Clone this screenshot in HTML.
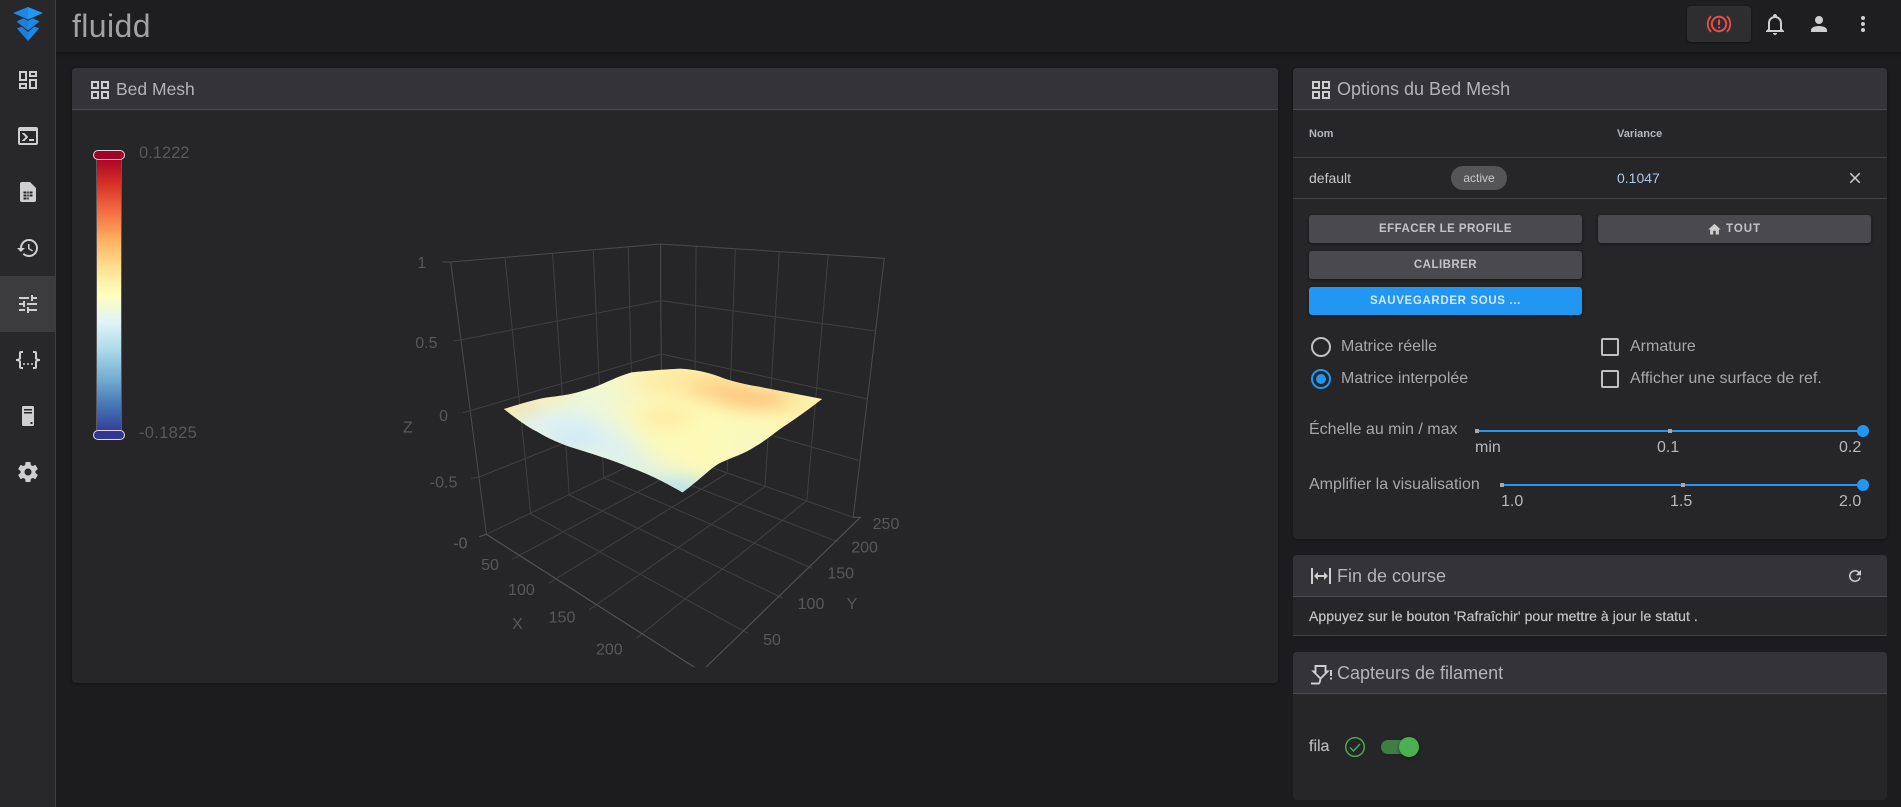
<!DOCTYPE html>
<html lang="fr"><head><meta charset="utf-8"><title>fluidd</title>
<style>
html,body{margin:0;padding:0;width:1901px;height:807px;overflow:hidden;background:#1c1c1e;font-family:"Liberation Sans",sans-serif;color:#b9b9ba}
div,span.t{position:absolute;box-sizing:border-box}
.t{white-space:nowrap;line-height:20px;height:20px}
svg{position:absolute;overflow:visible}
.card{background:#262628;border-radius:4px}
.hd{background:#343438;border-bottom:1px solid #4c4c4f;border-radius:4px 4px 0 0;left:0;top:0;height:42px;width:100%}
.ttl{font-size:18px;color:#b4b4b6}
.btn{background:#4a4a4e;border-radius:3px;box-shadow:0 1px 3px rgba(0,0,0,.45);height:28px;width:273px;text-align:center;font-weight:bold;font-size:11.5px;letter-spacing:.47px;line-height:28px;color:#c4c4c6}
.lb{font-size:16px;color:#a8a8aa}
.ic path{fill:#cfcfcf}
</style></head><body>

<!-- top bar -->
<div style="left:0;top:0;width:1901px;height:52px;background:#1e1e20;box-shadow:0 2px 4px rgba(0,0,0,.25)"></div>
<!-- sidebar -->
<div style="left:0;top:0;width:56px;height:807px;background:#28282a;border-right:1px solid #3e3e40"></div>
<div style="left:0;top:276px;width:55px;height:56px;background:#3c3c3e"></div>

<svg style="left:0;top:0" width="56" height="52" viewBox="0 0 56 52">
 <polygon points="17,28.5 28,24 39,28.5 28,41" fill="#1c80da"/>
 <polygon points="28,24 39,28.5 28,41" fill="#1e88e5"/>
 <polygon points="15.5,21.5 28,16 40.5,21.5 28,32" fill="#28282a"/>
 <polygon points="16.5,21.5 28,16 28,30.6" fill="#1c80da"/>
 <polygon points="28,16 39.5,21.5 28,30.6" fill="#1e88e5"/>
 <polygon points="12,13 28,6 44,13 28,20.6" fill="#28282a"/>
 <polygon points="13,13 28,7 28,19.5" fill="#1e88e5"/>
 <polygon points="28,7 43,13 28,19.5" fill="#2196f3"/>
</svg>
<span class="t" style="left:72px;top:7px;font-size:32px;height:38px;line-height:38px;color:#a2a2a2;letter-spacing:.4px">fluidd</span>

<!-- sidebar icons -->
<svg class="ic" style="left:16px;top:68px" width="24" height="24" viewBox="0 0 24 24"><path d="M19,5V7H15V5H19M9,5V11H5V5H9M19,13V19H15V13H19M9,17V19H5V17H9M21,3H13V9H21V3M11,3H3V13H11V3M21,11H13V21H21V11M11,15H3V21H11V15Z"/></svg>
<svg class="ic" style="left:16px;top:124px" width="24" height="24" viewBox="0 0 24 24"><path d="M20,19V7H4V19H20M20,3A2,2 0 0,1 22,5V19A2,2 0 0,1 20,21H4A2,2 0 0,1 2,19V5C2,3.89 2.9,3 4,3H20M13,17V15H18V17H13M9.58,13L5.57,9H8.4L11.7,12.3C12.09,12.69 12.09,13.33 11.7,13.72L8.42,17H5.59L9.58,13Z"/></svg>
<svg class="ic" style="left:16px;top:180px" width="24" height="24" viewBox="0 0 24 24"><path fill-rule="evenodd" d="M14,2H6A2,2 0 0,0 4,4V20A2,2 0 0,0 6,22H18A2,2 0 0,0 20,20V8L14,2M7.5,11.5H10.5V13.5H7.5V11.5M11.25,11.5H12.75V13.5H11.25V11.5M13.5,11.5H16.5V13.5H13.5V11.5M7.5,14.5H10.5V16.5H7.5V14.5M11.25,14.5H12.75V16.5H11.25V14.5M13.5,14.5H16.5V16.5H13.5V14.5M7.5,17.5H10.5V19.5H7.5V17.5M11.25,17.5H12.75V19.5H11.25V17.5Z"/></svg>
<svg class="ic" style="left:16px;top:236px" width="24" height="24" viewBox="0 0 24 24"><path d="M13.5,8H12V13L16.28,15.54L17,14.33L13.5,12.25V8M13,3A9,9 0 0,0 4,12H1L4.96,16.03L9,12H6A7,7 0 0,1 13,5A7,7 0 0,1 20,12A7,7 0 0,1 13,19C11.07,19 9.32,18.21 8.06,16.94L6.64,18.36C8.27,20 10.5,21 13,21A9,9 0 0,0 22,12A9,9 0 0,0 13,3"/></svg>
<svg class="ic" style="left:16px;top:292px" width="24" height="24" viewBox="0 0 24 24"><path d="M3,17V19H9V17H3M3,5V7H13V5H3M13,21V19H21V17H13V15H11V21H13M7,9V11H3V13H7V15H9V9H7M21,13V11H11V13H21M15,9H17V7H21V5H17V3H15V9Z"/></svg>
<svg class="ic" style="left:16px;top:348px" width="24" height="24" viewBox="0 0 24 24"><path d="M5,3H7V5H5V10A2,2 0 0,1 3,12A2,2 0 0,1 5,14V19H7V21H5C3.93,20.73 3,20.1 3,19V15A2,2 0 0,0 1,13H0V11H1A2,2 0 0,0 3,9V5A2,2 0 0,1 5,3M19,3A2,2 0 0,1 21,5V9A2,2 0 0,0 23,11H24V13H23A2,2 0 0,0 21,15V19A2,2 0 0,1 19,21H17V19H19V14A2,2 0 0,1 21,12A2,2 0 0,1 19,10V5H17V3H19M12,15A1,1 0 0,1 13,16A1,1 0 0,1 12,17A1,1 0 0,1 11,16A1,1 0 0,1 12,15M8,15A1,1 0 0,1 9,16A1,1 0 0,1 8,17A1,1 0 0,1 7,16A1,1 0 0,1 8,15M16,15A1,1 0 0,1 17,16A1,1 0 0,1 16,17A1,1 0 0,1 15,16A1,1 0 0,1 16,15Z"/></svg>
<svg class="ic" style="left:16px;top:404px" width="24" height="24" viewBox="0 0 24 24"><path fill-rule="evenodd" d="M7,2H17A1.5,1.5 0 0,1 18,3.5V20.5A1.5,1.5 0 0,1 17,22H7A1.5,1.5 0 0,1 6,20.5V3.5A1.5,1.5 0 0,1 7,2M8,5V6.5H16V5H8M8,8V9.5H16V8H8M14.5,18V20H16.5V18H14.5Z"/></svg>
<svg class="ic" style="left:16px;top:460px" width="24" height="24" viewBox="0 0 24 24"><path d="M12,15.5A3.5,3.5 0 0,1 8.5,12A3.5,3.5 0 0,1 12,8.5A3.5,3.5 0 0,1 15.5,12A3.5,3.5 0 0,1 12,15.5M19.43,12.97C19.47,12.65 19.5,12.33 19.5,12C19.5,11.67 19.47,11.34 19.43,11L21.54,9.37C21.73,9.22 21.78,8.95 21.66,8.73L19.66,5.27C19.54,5.05 19.27,4.96 19.05,5.05L16.56,6.05C16.04,5.66 15.5,5.32 14.87,5.07L14.5,2.42C14.46,2.18 14.25,2 14,2H10C9.75,2 9.54,2.18 9.5,2.42L9.13,5.07C8.5,5.32 7.96,5.66 7.44,6.05L4.95,5.05C4.73,4.96 4.46,5.05 4.34,5.27L2.34,8.73C2.21,8.95 2.27,9.22 2.46,9.37L4.57,11C4.53,11.34 4.5,11.67 4.5,12C4.5,12.33 4.53,12.65 4.57,12.97L2.46,14.63C2.27,14.78 2.21,15.05 2.34,15.27L4.34,18.73C4.46,18.95 4.73,19.03 4.95,18.95L7.44,17.94C7.96,18.34 8.5,18.68 9.13,18.93L9.5,21.58C9.54,21.82 9.75,22 10,22H14C14.25,22 14.46,21.82 14.5,21.58L14.87,18.93C15.5,18.67 16.04,18.34 16.56,17.94L19.05,18.95C19.27,19.03 19.54,18.95 19.66,18.73L21.66,15.27C21.78,15.05 21.73,14.78 21.54,14.63L19.43,12.97Z"/></svg>

<!-- top bar right -->
<div style="left:1687px;top:6px;width:64px;height:36px;background:#2e2e30;border-radius:4px;box-shadow:0 1px 3px rgba(0,0,0,.4)"></div>
<svg style="left:1707px;top:12px" width="24" height="24" viewBox="0 0 24 24" fill="none" stroke="#ef4b4b" stroke-width="2">
 <circle cx="12" cy="12" r="7.2"/>
 <path d="M4,4.2A11,11 0 0,0 4,19.8M20,4.2A11,11 0 0,1 20,19.8" stroke-width="1.8"/>
 <path d="M12,7.5V13M12,14.6V16.4" stroke-width="2.1"/>
</svg>
<svg class="ic" style="left:1763px;top:12px" width="24" height="24" viewBox="0 0 24 24"><path d="M10 21H14C14 22.1 13.1 23 12 23S10 22.1 10 21M21 19V20H3V19L5 17V11C5 7.9 7 5.2 10 4.3V4C10 2.9 10.9 2 12 2S14 2.9 14 4V4.3C17 5.2 19 7.9 19 11V17L21 19M17 11C17 8.2 14.8 6 12 6S7 8.2 7 11V18H17V11Z"/></svg>
<svg class="ic" style="left:1807px;top:12px" width="24" height="24" viewBox="0 0 24 24"><path d="M12,4A4,4 0 0,1 16,8A4,4 0 0,1 12,12A4,4 0 0,1 8,8A4,4 0 0,1 12,4M12,14C16.42,14 20,15.79 20,18V20H4V18C4,15.79 7.58,14 12,14Z"/></svg>
<svg class="ic" style="left:1851px;top:12px" width="24" height="24" viewBox="0 0 24 24"><path d="M12,16A2,2 0 0,1 14,18A2,2 0 0,1 12,20A2,2 0 0,1 10,18A2,2 0 0,1 12,16M12,10A2,2 0 0,1 14,12A2,2 0 0,1 12,14A2,2 0 0,1 10,12A2,2 0 0,1 12,10M12,4A2,2 0 0,1 14,6A2,2 0 0,1 12,8A2,2 0 0,1 10,6A2,2 0 0,1 12,4Z"/></svg>

<!-- Bed Mesh card -->
<div class="card" style="left:72px;top:68px;width:1206px;height:615px;box-shadow:0 1px 3px rgba(0,0,0,.3)"><div class="hd"></div></div>
<svg class="ic" style="left:88px;top:78px" width="24" height="24" viewBox="0 0 24 24"><path d="M3,11H11V3H3M5,5H9V9H5M13,21H21V13H13M15,15H19V19H15M3,21H11V13H3M5,15H9V19H5M13,3V11H21V3M19,9H15V5H19Z"/></svg>
<span class="t" style="left:116px;top:79px;font-size:17.5px;color:#b4b4b6">Bed Mesh</span>

<!-- colour bar -->
<div style="left:96px;top:155px;width:26px;height:280px;border:1px solid #5a5a5c;background:linear-gradient(to bottom,#a50026 0%,#d73027 10%,#f46d43 20%,#fdae61 30%,#fee090 40%,#ffffbf 50%,#e0f3f8 60%,#abd9e9 70%,#74add1 80%,#4575b4 90%,#313695 100%)"></div>
<div style="left:93px;top:150px;width:32px;height:10px;background:#a50026;border:1px solid #ddd;border-radius:5px"></div>
<div style="left:93px;top:430px;width:32px;height:10px;background:#313695;border:1px solid #ddd;border-radius:5px"></div>
<span class="t" style="left:139px;top:143px;font-size:16.5px;color:#58585a">0.1222</span>
<span class="t" style="left:139px;top:423px;font-size:16.5px;color:#58585a;letter-spacing:.3px">-0.1825</span>

<!-- 3D chart -->
<svg style="left:0;top:0" width="1901" height="807" viewBox="0 0 1901 807">
<defs>
 <clipPath id="sf"><path d="M347,537 C370,530 420,512 465,503 C500,497 530,497 590,475 C620,466 660,440 705,427 L780,420 L840,416 C880,418 920,428 950,440 C980,453 1020,463 1060,470 L1238,507 C1215,525 1180,555 1130,590 C1100,612 1085,628 1050,650 C1020,672 990,680 950,700 C925,715 900,745 847,787 C810,765 760,735 700,712 C650,690 590,670 530,650 C500,638 470,625 440,605 C410,590 375,560 347,537Z"/></clipPath>
 <filter id="b1" filterUnits="userSpaceOnUse" x="200" y="300" width="1200" height="600"><feGaussianBlur stdDeviation="26"/></filter>
 <filter id="b2" filterUnits="userSpaceOnUse" x="200" y="300" width="1200" height="600"><feGaussianBlur stdDeviation="42"/></filter>
 <clipPath id="cc"><rect x="0" y="0" width="1901" height="667"/></clipPath>
</defs>
<g clip-path="url(#cc)">
<g transform="translate(380,230) scale(.35714,.33333)" fill="none" stroke="#3f3f41" stroke-width="1">
 <path vector-effect="non-scaling-stroke" stroke="#4b4b4d" d="M175,96H198L786,42L1412,85L1325,862M198,96L298,913M786,42V212L790,660"/>
 <path vector-effect="non-scaling-stroke" d="M205,333L225,330L786,212L1388,303"/>
 <path vector-effect="non-scaling-stroke" d="M232,548L250,543L788,372L1365,507"/>
 <path vector-effect="non-scaling-stroke" d="M255,745L275,742L790,522L1342,692"/>
 <path vector-effect="non-scaling-stroke" d="M350,82L422,852M483,70L530,795M597,58L626,743M695,50L710,700"/>
 <path vector-effect="non-scaling-stroke" d="M885,50L880,695M995,57L972,730M1118,65L1078,770M1255,75L1195,812"/>
 <path vector-effect="non-scaling-stroke" d="M298,913L790,660L1325,862"/>
 <path vector-effect="non-scaling-stroke" d="M422,852L1030,1210M530,795L1128,1105M626,743L1210,1015M710,700L1282,935"/>
 <path vector-effect="non-scaling-stroke" d="M370,988L880,695M472,1060L972,730M585,1140L1078,770M718,1225L1195,812"/>
 <path vector-effect="non-scaling-stroke" stroke="#505052" stroke-width="1.2" d="M278,920L298,913L900,1325L1345,862L1325,862"/>
 <!-- surface -->
 <g clip-path="url(#sf)" stroke="none">
  <rect x="300" y="380" width="980" height="440" fill="#fdfab8"/>
  <g filter="url(#b2)">
   <ellipse cx="530" cy="600" rx="210" ry="70" fill="#dcf1f7" transform="rotate(18 530 600)"/>
   <ellipse cx="620" cy="490" rx="120" ry="35" fill="#eaf6df"/>
   <ellipse cx="740" cy="735" rx="160" ry="38" fill="#d6eef5" transform="rotate(25 740 735)"/>
   <ellipse cx="1040" cy="650" rx="70" ry="25" fill="#eef7cf"/>
   <ellipse cx="860" cy="450" rx="160" ry="38" fill="#fee296"/>
   <ellipse cx="1150" cy="510" rx="100" ry="28" fill="#fee090"/>
  </g>
  <g filter="url(#b1)">
   <ellipse cx="1045" cy="506" rx="100" ry="26" fill="#fdbd76"/>
   <ellipse cx="950" cy="478" rx="90" ry="24" fill="#fdcb82"/>
   <ellipse cx="800" cy="565" rx="75" ry="20" fill="#fee59c"/>
   <ellipse cx="540" cy="625" rx="70" ry="26" fill="#cde9f3"/>
   <ellipse cx="845" cy="780" rx="95" ry="32" fill="#b8e0ec"/>
   <ellipse cx="385" cy="532" rx="60" ry="16" fill="#fed98a"/>
   <ellipse cx="480" cy="505" rx="60" ry="12" fill="#fee9a0"/>
  </g>
 </g>
</g>
</g>
<g font-family="Liberation Sans,sans-serif" font-size="16" fill="#58585a" text-anchor="middle">
 <text x="421.8" y="268">1</text>
 <text x="426.4" y="348">0.5</text>
 <text x="443.6" y="421">0</text>
 <text x="443.6" y="487.5">-0.5</text>
 <text x="460.4" y="548.5">-0</text>
 <text x="463" y="548.5">0</text>
 <text x="407.9" y="432.5">Z</text>
 <text x="490" y="570">50</text>
 <text x="521.4" y="595">100</text>
 <text x="517.5" y="629">X</text>
 <text x="562" y="622.5">150</text>
 <text x="609.3" y="654.5">200</text>
 <text x="772" y="645">50</text>
 <text x="811" y="609">100</text>
 <text x="852" y="609">Y</text>
 <text x="840.7" y="578.5">150</text>
 <text x="864.6" y="552.5">200</text>
 <text x="886" y="529">250</text>
</g>
</svg>

<!-- Options card -->
<div class="card" style="left:1293px;top:68px;width:594px;height:471px;box-shadow:0 1px 3px rgba(0,0,0,.3)"><div class="hd"></div></div>
<svg class="ic" style="left:1309px;top:78px" width="24" height="24" viewBox="0 0 24 24"><path d="M3,11H11V3H3M5,5H9V9H5M13,21H21V13H13M15,15H19V19H15M3,21H11V13H3M5,15H9V19H5M13,3V11H21V3M19,9H15V5H19Z"/></svg>
<span class="t ttl" style="left:1337px;top:79px">Options du Bed Mesh</span>
<span class="t" style="left:1309px;top:124px;font-size:11px;font-weight:bold;color:#b4b8bc">Nom</span>
<span class="t" style="left:1617px;top:124px;font-size:11px;font-weight:bold;color:#b4b8bc">Variance</span>
<div style="left:1293px;top:157px;width:594px;height:1px;background:#414143"></div>
<div style="left:1293px;top:198px;width:594px;height:1px;background:#414143"></div>
<span class="t" style="left:1309px;top:168px;font-size:14px;color:#c8c8c8">default</span>
<div style="left:1451px;top:166px;width:56px;height:24px;border-radius:12px;background:#555557;color:#c8c8c8;font-size:12px;line-height:24px;text-align:center">active</div>
<span class="t" style="left:1617px;top:168px;font-size:14px;color:#a8c8ee">0.1047</span>
<svg class="ic" style="left:1846px;top:169px" width="18" height="18" viewBox="0 0 24 24"><path d="M19,6.41L17.59,5L12,10.59L6.41,5L5,6.41L10.59,12L5,17.59L6.41,19L12,13.41L17.59,19L19,17.59L13.41,12L19,6.41Z"/></svg>

<div class="btn" style="left:1309px;top:215px">EFFACER LE PROFILE</div>
<div class="btn" style="left:1309px;top:251px">CALIBRER</div>
<div class="btn" style="left:1309px;top:287px;background:#2196f3;color:#d2e8fa;letter-spacing:.65px">SAUVEGARDER SOUS ...</div>
<div class="btn" style="left:1598px;top:215px;letter-spacing:.95px"><span style="padding-left:18px">TOUT</span></div>
<svg class="ic" style="left:1707px;top:222px" width="15" height="15" viewBox="0 0 24 24"><path d="M10,20V14H14V20H19V12H22L12,3L2,12H5V20H10Z"/></svg>

<!-- radios -->
<div style="left:1311px;top:337px;width:20px;height:20px;border-radius:50%;border:2px solid #c0c0c0"></div>
<div style="left:1311px;top:369px;width:20px;height:20px;border-radius:50%;border:2px solid #2196f3"></div>
<div style="left:1316px;top:374px;width:10px;height:10px;border-radius:50%;background:#2196f3"></div>
<span class="t lb" style="left:1341px;top:337px">Matrice réelle</span>
<span class="t lb" style="left:1341px;top:369px">Matrice interpolée</span>
<div style="left:1601px;top:338px;width:18px;height:18px;border-radius:2px;border:2px solid #c0c0c0"></div>
<div style="left:1601px;top:370px;width:18px;height:18px;border-radius:2px;border:2px solid #c0c0c0"></div>
<span class="t lb" style="left:1630px;top:337px">Armature</span>
<span class="t lb" style="left:1630px;top:369px">Afficher une surface de ref.</span>

<!-- sliders -->
<span class="t lb" style="left:1309px;top:420px">Échelle au min / max</span>
<div style="left:1477px;top:430px;width:386px;height:2px;background:#2196f3"></div>
<div style="left:1475px;top:429px;width:4px;height:4px;background:#a8a8aa"></div>
<div style="left:1668px;top:429px;width:4px;height:4px;background:#a8a8aa"></div>
<div style="left:1857px;top:425px;width:12px;height:12px;border-radius:50%;background:#2196f3"></div>
<span class="t lb" style="left:1475px;top:438px;color:#b8b8ba">min</span>
<span class="t lb" style="left:1657px;top:438px;color:#b8b8ba">0.1</span>
<span class="t lb" style="left:1839px;top:438px;color:#b8b8ba">0.2</span>

<span class="t lb" style="left:1309px;top:475px">Amplifier la visualisation</span>
<div style="left:1502px;top:484px;width:361px;height:2px;background:#2196f3"></div>
<div style="left:1500px;top:483px;width:4px;height:4px;background:#a8a8aa"></div>
<div style="left:1681px;top:483px;width:4px;height:4px;background:#a8a8aa"></div>
<div style="left:1857px;top:479px;width:12px;height:12px;border-radius:50%;background:#2196f3"></div>
<span class="t lb" style="left:1501px;top:492px;color:#b8b8ba">1.0</span>
<span class="t lb" style="left:1670px;top:492px;color:#b8b8ba">1.5</span>
<span class="t lb" style="left:1839px;top:492px;color:#b8b8ba">2.0</span>

<!-- Fin de course -->
<div class="card" style="left:1293px;top:555px;width:594px;height:81px;border-bottom:1px solid #414143;border-radius:4px 4px 0 0"><div class="hd"></div></div>
<svg class="ic" style="left:1309px;top:564px" width="24" height="24" viewBox="0 0 24 24"><path d="M9,11H15V8L19,12L15,16V13H9V16L5,12L9,8V11M2,20V4H4V20H2M20,20V4H22V20H20Z"/></svg>
<span class="t ttl" style="left:1337px;top:566px">Fin de course</span>
<svg class="ic" style="left:1846px;top:567px" width="18" height="18" viewBox="0 0 24 24"><path d="M17.65,6.35C16.2,4.9 14.21,4 12,4A8,8 0 0,0 4,12A8,8 0 0,0 12,20C15.73,20 18.84,17.45 19.73,14H17.65C16.83,16.33 14.61,18 12,18A6,6 0 0,1 6,12A6,6 0 0,1 12,6C13.66,6 15.14,6.69 16.22,7.78L13,11H20V4L17.65,6.35Z"/></svg>
<span class="t" style="left:1309px;top:606px;font-size:14px;color:#c4c4c6;letter-spacing:.07px;-webkit-text-stroke:.2px #c4c4c6">Appuyez sur le bouton 'Rafraîchir' pour mettre à jour le statut .</span>

<!-- Capteurs -->
<div class="card" style="left:1293px;top:652px;width:594px;height:148px"><div class="hd"></div></div>
<svg style="left:1309px;top:662px" width="24" height="24" viewBox="0 0 24 24" fill="none" stroke="#cfcfcf" stroke-width="1.9">
 <path d="M6.5,4H16.5V9.5H18.5L11.5,16.5L4.5,9.5H6.5Z"/>
 <path d="M2,21.5H9.5C10.5,21.5 11,19.5 11.5,16.5"/>
 <path d="M22,8V14M22,15.5V17.5"/>
</svg>
<span class="t ttl" style="left:1337px;top:663px">Capteurs de filament</span>
<span class="t" style="left:1309px;top:737px;font-size:16px;color:#b8b8ba;-webkit-text-stroke:.2px #b8b8ba">fila</span>
<svg style="left:1343px;top:735px" width="24" height="24" viewBox="0 0 24 24" fill="none" stroke="#4caf50" stroke-width="1.4"><circle cx="12" cy="12" r="9.3"/><path d="M7,12.5L10.5,16L17,9"/></svg>
<div style="left:1381px;top:740px;width:32px;height:14px;border-radius:7px;background:#3f7d42"></div>
<div style="left:1399px;top:737px;width:20px;height:20px;border-radius:50%;background:#4caf50;box-shadow:0 1px 3px rgba(0,0,0,.5)"></div>
</body></html>
